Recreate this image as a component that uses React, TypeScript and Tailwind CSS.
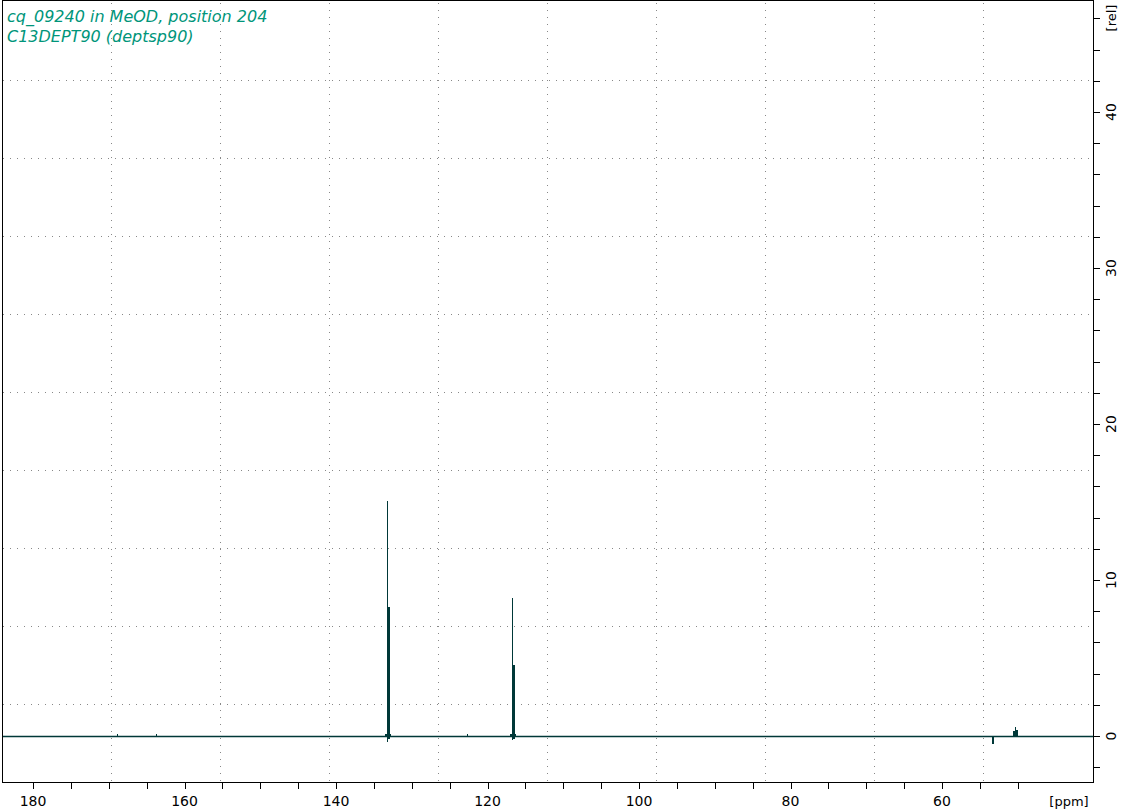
export default function App() {
  const vx = [111, 220, 329, 438, 547, 656, 765, 874, 983];
  const hy = [80, 158, 236, 314, 392, 470, 548, 626, 704];
  const xPos = (p: number) => 33 + (180 - p) * 7.575;
  const xt: number[] = [];
  for (let p = 180; p >= 50; p -= 5) xt.push(p);
  const yt: number[] = [];
  for (let v = -2; v <= 46; v += 2) yt.push(v);
  const yPos = (v: number) => 736 - v * 15.6;
  const c = "#003838";
  return (
    <div className="w-[1124px] h-[811px] bg-white">
      <svg width="1124" height="811" className="block" style={{ fontFamily: "'DejaVu Sans', sans-serif" }}>
        {vx.map((x) => (
          <line key={x} x1={x + 0.5} y1={3} x2={x + 0.5} y2={782} stroke="#888" strokeDasharray="1 6" />
        ))}
        {hy.map((y) => (
          <line key={y} x1={3} y1={y + 0.5} x2={1093} y2={y + 0.5} stroke="#888" strokeDasharray="1 6" />
        ))}
        <line x1={2.5} y1={0} x2={2.5} y2={782.5} stroke="#000" />
        <line x1={2} y1={782.5} x2={1093.5} y2={782.5} stroke="#000" />
        <line x1={1093.5} y1={0} x2={1093.5} y2={783} stroke="#000" />
        <line x1={2} y1={0.5} x2={1094} y2={0.5} stroke="#000" />
        {xt.map((p) => (
          <line key={p} x1={Math.round(xPos(p)) + 0.5} y1={783} x2={Math.round(xPos(p)) + 0.5} y2={789} stroke="#000" />
        ))}
        {[180, 160, 140, 120, 100, 80, 60].map((p) => (
          <text key={p} x={xPos(p)} y={806} textAnchor="middle" fontSize="14" fill="#000">{p}</text>
        ))}
        <text x={1069} y={806} textAnchor="middle" fontSize="13" fill="#000">[ppm]</text>
        {yt.map((v) => (
          <line key={v} x1={1094} y1={Math.round(yPos(v)) + 0.5} x2={1100} y2={Math.round(yPos(v)) + 0.5} stroke="#000" />
        ))}
        {[0, 10, 20, 30, 40].map((v) => (
          <text key={v} transform={`translate(1116 ${yPos(v)}) rotate(-90)`} textAnchor="middle" fontSize="14" fill="#000">{v}</text>
        ))}
        <text transform="translate(1116 18) rotate(-90)" textAnchor="middle" fontSize="13" fill="#000">[rel]</text>
        <line x1={3} y1={736.5} x2={1093} y2={736.5} stroke={c} strokeWidth={1.5} />
        <rect x={387} y={501} width={1} height={241} fill={c} />
        <rect x={388} y={607} width={2} height={132} fill={c} />
        <rect x={385} y={734} width={6} height={3} fill={c} />
        <rect x={512} y={598} width={1} height={142} fill={c} />
        <rect x={513} y={665} width={2} height={74} fill={c} />
        <rect x={510} y={734} width={6} height={3} fill={c} />
        <rect x={992} y={736} width={2} height={8} fill={c} />
        <rect x={1013} y={731} width={2} height={6} fill={c} />
        <rect x={1015} y={727} width={1} height={10} fill={c} />
        <rect x={1016} y={730} width={2} height={7} fill={c} />
        <rect x={117} y={734} width={1} height={2} fill={c} />
        <rect x={156} y={734} width={1} height={2} fill={c} />
        <rect x={467} y={734} width={1} height={2} fill={c} />
        <text x={7} y={22} fontSize="16" fontStyle="italic" fill="#00957a">cq_09240 in MeOD, position 204</text>
        <text x={7} y={42} fontSize="16" fontStyle="italic" fill="#00957a">C13DEPT90 (deptsp90)</text>
      </svg>
    </div>
  );
}
